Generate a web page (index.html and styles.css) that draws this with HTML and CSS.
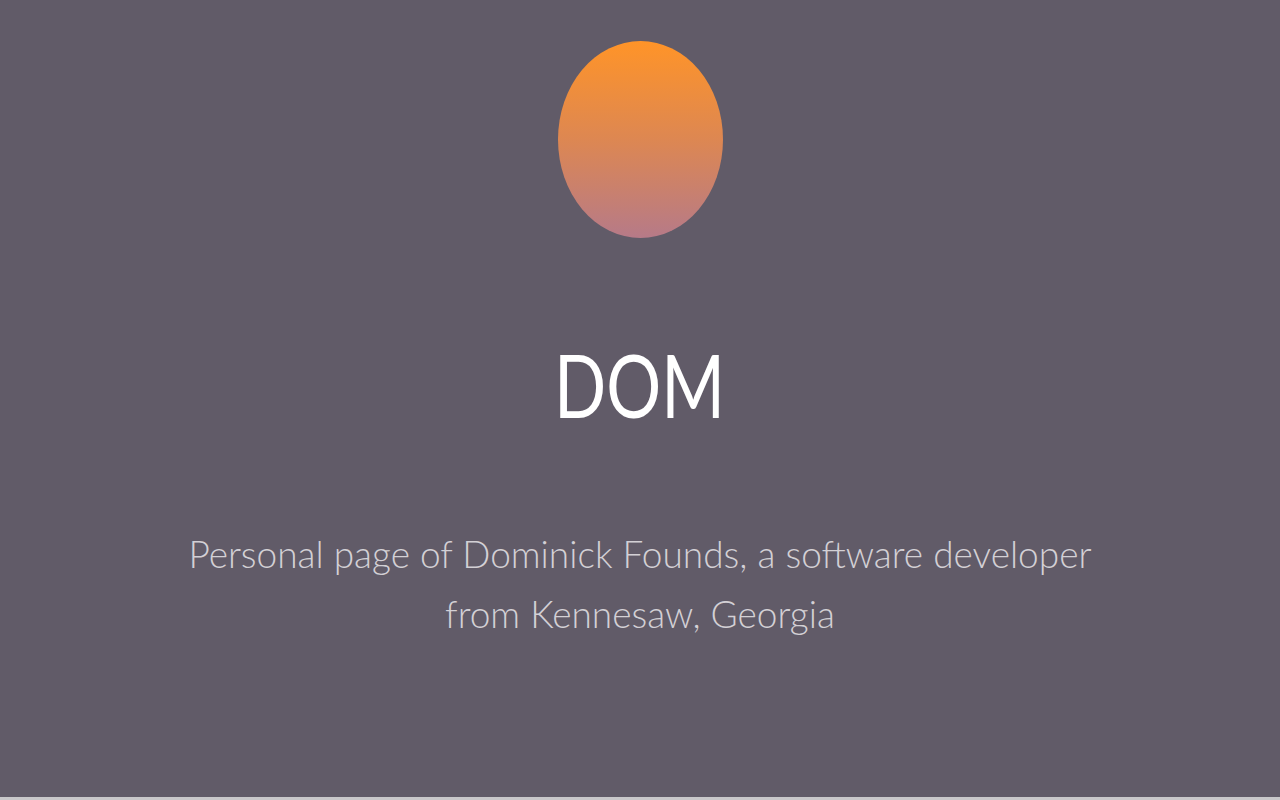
FILE: index.html
```html
<!DOCTYPE html>
<html lang="en">
<head>
<meta charset="utf-8">
<title>Dom</title>
<link rel="stylesheet" href="styles.css">
</head>
<body>
<header class="hero">
  <div class="avatar"></div>
  <h1 class="title">DOM</h1>
  <p class="subtitle">Personal page of Dominick Founds, a software developer<br>from Kennesaw, Georgia</p>
</header>
<section class="next"></section>
</body>
</html>
```
FILE: styles.css
```css
html, body {
  margin: 0;
  padding: 0;
}
body {
  background: #c9c8ca;
  font-family: Lato, "Open Sans", sans-serif;
}
.hero {
  height: 797px;
  background: #615b68;
  display: flex;
  flex-direction: column;
  align-items: center;
  box-sizing: border-box;
  padding-top: 41px;
}
.avatar {
  width: 165px;
  height: 197px;
  border-radius: 50%;
  background: linear-gradient(180deg, #ff9428 0%, #dd8752 50%, #b67a88 100%);
}
.title {
  margin: 96px 0 0;
  font-size: 88px;
  line-height: 100px;
  font-weight: 400;
  color: #ffffff;
  transform: scaleX(0.78);
}
.subtitle {
  margin: 90px 0 0;
  font-size: 37px;
  line-height: 60px;
  font-weight: 300;
  color: #d3d0d5;
  text-align: center;
}
.next {
  height: 40px;
}
```
